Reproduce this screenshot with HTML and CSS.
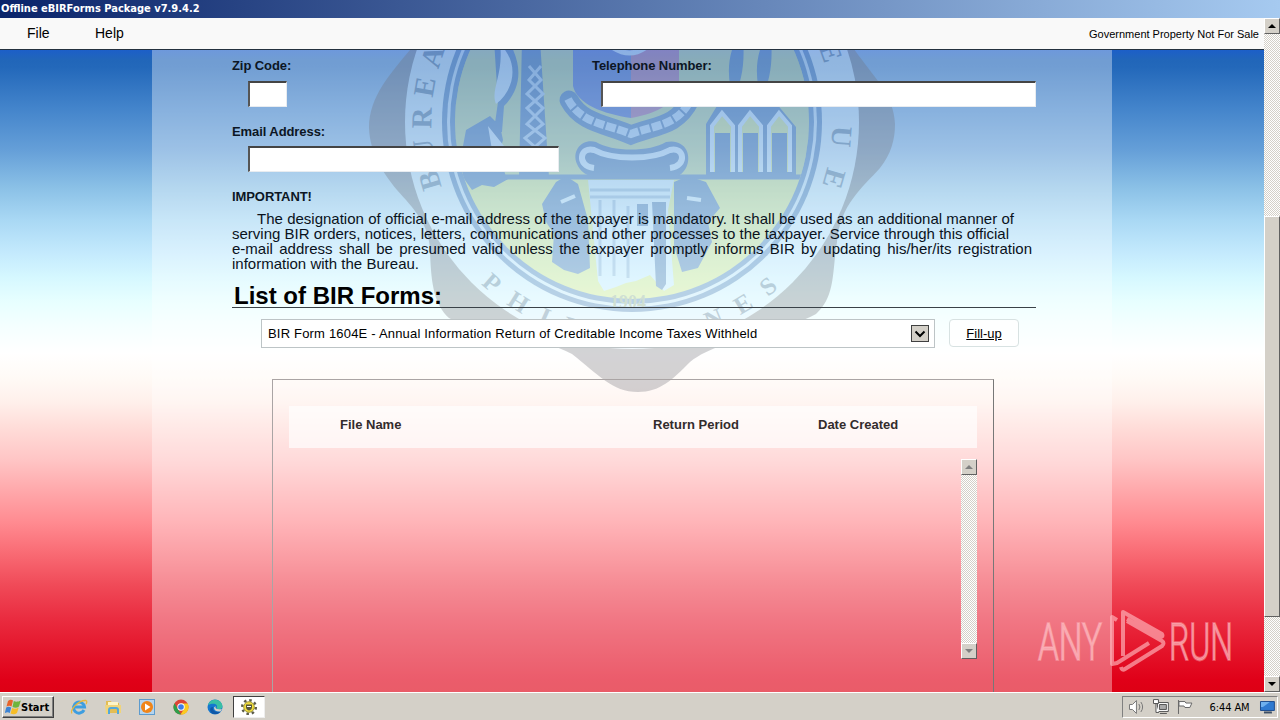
FILE: index.html
```html
<!DOCTYPE html>
<html lang="en">
<head>
    <meta charset="UTF-8">
    <title>Offline eBIRForms Package v7.9.4.2</title>
    <link rel="stylesheet" href="styles.css">
</head>
<body>
    <div class="titlebar">Offline eBIRForms Package v7.9.4.2</div>

    <div class="window">
        <div class="page">
            <nav class="menu">
                <a class="menu-file">File</a>
                <a class="menu-help">Help</a>
                <span class="notice">Government Property Not For Sale</span>
            </nav>

            <main class="column">
                <svg class="seal" viewBox="152 50 960 642" width="960" height="642">
                    <defs>
                        <path id="arc-left" d="M442 187 A200 200 0 0 1 445 50"/>
                        <path id="arc-right" d="M818 46 A200 200 0 0 1 821 188"/>
                        <path id="arc-bottom" d="M481 284 A222 222 0 0 0 783 284"/>
                        <clipPath id="disc"><circle cx="632" cy="122" r="177"/></clipPath>
                    </defs>
                    <path fill="#707078" d="M418 40 C398 66 369 92 369 128 C370 154 384 174 397 190 C414 209 429 224 430 250 C431 284 434 304 449 318 C486 338 540 336 572 354 C598 374 612 392 638 392 C660 392 672 380 690 362 C720 338 780 334 816 314 C836 296 832 270 837 242 C840 205 862 188 880 168 C891 154 895 140 895 124 C894 92 868 72 848 40Z"/>
                    <circle cx="632" cy="122" r="227" fill="#dcf1ff"/>
                    <circle cx="632" cy="122" r="190" fill="#3e6dad"/>
                    <circle cx="632" cy="122" r="185" fill="#cfe6fb"/>
                    <circle cx="632" cy="122" r="182" fill="#3e6dad"/>
                    <circle cx="632" cy="122" r="177" fill="#dde873"/>
                    <g clip-path="url(#disc)">
                        <rect x="450" y="40" width="370" height="137" fill="#a8c088" opacity=".6"/>
                        <path stroke="#3764a4" stroke-width="5" d="M462 177H815"/>
                        <!-- left tower and plant -->
                        <path fill="#3764a4" d="M522 40h18l9 137h-30zM466 130l24-14 10 10 3 14-4 14 8 26-50-2zM462 176l48 2-16 9-12-2-10 5zM494 40h14c18 30 10 52-4 66l-2 26-8-2 4-28z"/>
                        <path fill="#d5ebff" d="M500 44c20 20 14 46-4 60-6-14 8-30 4-60zM488 126l16 20-12 4z"/>
                        <path fill="none" stroke="#b5d0f0" stroke-width="3" d="M529 66l12 14-14 14 16 14-16 16 18 14-18 16 18 14M541 66l-12 14 14 14-16 14 16 16-18 14 18 16"/>
                        <!-- shield and ribbon -->
                        <path fill="#3c56c0" d="M573 40h58v78c-28-4-54-14-58-32z"/>
                        <path fill="#b05288" d="M631 40h48v48c-6 18-26 26-48 30z"/>
                        <path fill="none" stroke="#cfe6fb" stroke-width="5" d="M608 44q22 18 42 0"/>
                        <path fill="none" stroke="#3764a4" stroke-width="19" stroke-linecap="round" d="M569 100c13 24 38 24 62 35 24-10 46-8 59-35"/>
                        <path fill="none" stroke="#bcd8f8" stroke-width="8" stroke-dasharray="10 2" d="M568 99c13 25 39 25 63 35 24-9 47-8 60-35"/>
                        <!-- granaries -->
                        <path fill="#3764a4" d="M706 178v-54l14-23 9-16 9 18 9-18 9 18 10-18 10 18 20 24v51z"/>
                        <path fill="#dde873" stroke="#d5ebff" stroke-width="4" d="M712 172v-46l10-13 11 13v46M740 172v-46l10-13 11 13v46M769 172v-46l10-13 11 13v46"/>
                        <path fill="#3764a4" d="M715 133h15v43h-15zM743 133h15v43h-15zM772 133h15v43h-15zM736 40c-10 20-8 40-3 60 9-18 12-38 10-60zM764 40c-10 20-8 40-3 60 9-18 12-38 10-60z"/>
                        <!-- column capital -->
                        <path fill="#3764a4" d="M577 164c-6-14 6-26 19-22 16 10 54 10 70 0 18-4 27 12 20 26-8 14-22 10-38 10h-36c-15 0-29 0-35-14z"/>
                        <path fill="none" stroke="#d5ebff" stroke-width="6" d="M594 168c-18-2-14-22 0-18 18 10 58 10 76 0 14-4 18 16 0 18"/>
                        <path fill="#d2ebff" d="M588 180h86l-6 30 6 75-10 6-14-16-14 6-10 2-10 4-12 4-6-10z"/>
                        <path fill="#3764a4" d="M556 182l10-6 12 8 10 36 2 48-12 6-14-4-12-8 2-28-8-12-4-18zM674 182l14-6 18 6 14 26-12 14 4 20-14 26-16 4-8-26zM652 202h14v82l-4 6-6-4zM637 204h11v22h-11z"/>
                        <path stroke="#3764a4" stroke-width="3" opacity=".5" d="M600 200v76M614 200v76M628 206v72M590 190h80M590 197h80"/>
                        <path stroke="#d5ebff" stroke-width="4" d="M561 202l14-6M687 198l14 2"/>
                    </g>
                    <text class="seal-year" x="610" y="308">1904</text>
                    <text class="seal-text side" textLength="140"><textPath href="#arc-left">BUREA</textPath></text>
                    <text class="seal-text side" textLength="142"><textPath href="#arc-right">ENUE</textPath></text>
                    <text class="seal-text" textLength="326"><textPath href="#arc-bottom">PHILIPPINES</textPath></text>
                </svg>

                <div class="content">
                    <div class="row">
                        <div class="field zip">
                            <label>Zip Code:</label>
                            <input type="text">
                        </div>
                        <div class="field phone">
                            <label>Telephone Number:</label>
                            <input type="text">
                        </div>
                    </div>
                    <div class="field email">
                        <label>Email Address:</label>
                        <input type="text">
                    </div>
                    <div class="important">IMPORTANT!</div>
                    <div class="note">
                        <span class="line line-1">The designation of official e-mail address of the taxpayer is mandatory. It shall be used as an additional manner of</span>
                        <span class="line line-2">serving BIR orders, notices, letters, communications and other processes to the taxpayer. Service through this official</span>
                        <span class="line line-3">e-mail address shall be presumed valid unless the taxpayer promptly informs BIR by updating his/her/its registration</span>
                        <span class="line line-4">information with the Bureau.</span>
                    </div>
                    <h2>List of BIR Forms:</h2>
                    <div class="picker">
                        <div class="select">
                            <span class="select-text">BIR Form 1604E - Annual Information Return of Creditable Income Taxes Withheld</span>
                            <span class="select-arrow"><svg width="12" height="8" viewBox="0 0 12 8"><path d="M1.500 1.500L6 6l4.500-4.500" fill="none" stroke="#000" stroke-width="2"/></svg></span>
                        </div>
                        <a class="fillup">Fill-up</a>
                    </div>
                    <div class="panel">
                        <div class="table-head">
                            <span class="th-name">File Name</span>
                            <span class="th-period">Return Period</span>
                            <span class="th-date">Date Created</span>
                        </div>
                        <div class="scroll inner">
                            <div class="scroll-btn"><i class="up off"></i></div>
                            <div class="scroll-btn"><i class="down off"></i></div>
                        </div>
                    </div>
                </div>
            </main>

            <svg class="anyrun" width="200" height="70" viewBox="1035 606 200 70">
                <text class="anyrun-text" transform="translate(1038 660) scale(.5 1)" textLength="128" lengthAdjust="spacingAndGlyphs">ANY</text>
                <text class="anyrun-text" transform="translate(1169 660) scale(.5 1)" textLength="128" lengthAdjust="spacingAndGlyphs">RUN</text>
                <path class="anyrun-mark" d="M1117 620l-5-3v47l5-1 32-20M1123 656v-44l39 22q2 3-2 3l-33-18M1121 667q1 4 4 2l37-23q3-3 0-5l-35-20"/>
            </svg>
        </div>

        <div class="scroll outer">
            <div class="scroll-btn"><i class="up"></i></div>
            <div class="scroll-thumb"></div>
            <div class="scroll-btn last"><i class="down"></i></div>
        </div>
    </div>

    <div class="taskbar">
        <div class="start">
            <svg width="16" height="16" viewBox="0 0 16 16">
                <path fill="#e8642a" d="M3 2c2-2 4-1.500 5-.5L6.500 7.500C5 6.500 3.500 6.500 1.500 7.500z"/>
                <path fill="#6fb53c" d="M8.800 2c2 1 4 1 7-.5L14 7.500c-2 1.500-4 1.500-6.500.5z"/>
                <path fill="#3d84d4" d="M1.200 8.500c1.500-1 3-1 5 0L4.800 14c-1.500-1-3-1-5 0z"/>
                <path fill="#f6bd27" d="M7.200 9c2 1 4 1 6.500-.5L12 14c-2 1.500-4 1.500-6.500.5z"/>
            </svg>
            <span>Start</span>
        </div>
        <div class="quick">
            <svg width="18" height="18" viewBox="0 0 18 18">
                <path d="M14 12a5.500 5.500 0 1 1 .5-3H5" fill="none" stroke="#3e9ee0" stroke-width="3"/>
                <path d="M2 15.500C-1 13 8 2 16 2.500c1.500.5.5 3 0 3.500" fill="none" stroke="#e9b73b" stroke-width="1.300"/>
            </svg>
            <svg width="18" height="18" viewBox="0 0 18 18">
                <path d="M2 3h5l1 2h7v10H2z" fill="#e3bd54"/>
                <path d="M4 4h10v5H4z" fill="#fdf4c8"/>
                <path d="M1 7h16v8h-3v-4H5v5H2z" fill="#f0d47a"/>
                <path d="M5 16v-4q0-2 2-2h5q2 0 2 2v4" fill="none" stroke="#52a8dc" stroke-width="2"/>
            </svg>
            <svg width="18" height="18" viewBox="0 0 18 18">
                <rect x="1.500" y="1.500" width="15" height="15" fill="#b5d4ee" stroke="#5d9bce"/>
                <circle cx="9" cy="9" r="6" fill="#f08519"/>
                <path d="M7 5.500v7L12.500 9z" fill="#fff"/>
            </svg>
            <svg width="18" height="18" viewBox="0 0 18 18">
                <circle cx="9" cy="9" r="7.500" fill="#dd4436"/>
                <path d="M2.500 5.200L9 16.500A7.500 7.500 0 0 1 2.500 5.200z" fill="#2d9f4b"/>
                <path d="M9 5.500h6.700A7.500 7.500 0 0 1 8.500 16.500l3.500-5.500z" fill="#fbcb20"/>
                <circle cx="9" cy="9" r="3.700" fill="#fff"/>
                <circle cx="9" cy="9" r="2.800" fill="#3f7de8"/>
            </svg>
            <svg width="18" height="18" viewBox="0 0 18 18">
                <circle cx="9" cy="9" r="7.500" fill="#1477cf"/>
                <path d="M2 7C4 0 15 0 16.500 8c0 4-5 4-6 2 2-3-2-6-8.500-3z" fill="#39bfa5"/>
                <path d="M7 9c-1 3 2 6 7.500 4.500-2 3-7 3.500-9.500 1C3.500 12 4 9 7 9z" fill="#1057a6"/>
                <path d="M9.500 8q-1 4 6.500 3l-1.500 2.500Q8 14 8 9.500z" fill="#d4d0c8"/>
            </svg>
        </div>
        <div class="task">
            <svg width="18" height="18" viewBox="0 0 18 18">
                <circle cx="9" cy="9" r="6.800" fill="none" stroke="#5a5a4a" stroke-width="2.500" stroke-dasharray="2.500 2.840"/>
                <circle cx="9" cy="9" r="5.300" fill="#f0dc3c" stroke="#a39a3a"/>
                <path d="M6 6.500h6v2.500q0 2.500-3 3.500-3-1-3-3.500z" fill="#56563a"/>
                <path d="M7 8.500h4" stroke="#fff"/>
            </svg>
        </div>
        <div class="tray">
            <svg width="18" height="18" viewBox="0 0 18 18" fill="#fff" stroke="#777">
                <path d="M1.500 6.500h3l4-4v13l-4-4h-3z"/>
                <path d="M11 6q2 3 0 6M13 4q3.500 5 0 10" fill="none"/>
            </svg>
            <svg width="18" height="18" viewBox="0 0 18 18" fill="#fff" stroke="#555">
                <path d="M5.500 4.500h11v9h-11z"/>
                <path d="M7.500 6.500h7v5h-7z" fill="#aaa"/>
                <path d="M1.500 1.500h5v4h-5zM4 5.500v9h3M8 15.500h7"/>
            </svg>
            <svg width="18" height="18" viewBox="0 0 18 18" fill="#fff" stroke="#666">
                <path d="M2.500 2v14"/>
                <path d="M3 3.500h6l1 1.500h6l-2 4.500h-5l-1-1.500H3z"/>
            </svg>
            <span class="clock">6:44 AM</span>
            <svg width="18" height="18" viewBox="0 0 18 18">
                <path d="M1.500 3.500h14v9h-14z" fill="#2f7ad0" stroke="#1d4c8d"/>
                <path d="M2 4h9l-7 5H2z" fill="#6eb0ee"/>
                <path d="M5 14.500h8" stroke="#3d4f66" stroke-width="2"/>
            </svg>
        </div>
    </div>
</body>
</html>
```

FILE: styles.css
```css
* {
    box-sizing: border-box;
}
body {
    margin: 0;
    width: 1280px;
    height: 720px;
    overflow: hidden;
    display: flex;
    flex-direction: column;
    font-family: "Liberation Sans", Arial, sans-serif;
    font-size: 13px;
    color: #000;
    background: #d4d0c8;
}
.titlebar {
    height: 18px;
    padding-left: 1px;
    color: #fff;
    font: bold 11px/18px "DejaVu Sans Condensed", Tahoma, sans-serif;
    background: linear-gradient(90deg, #0a246a, #a6caf0);
}
.window {
    height: 674px;
    display: flex;
}
.page {
    position: relative;
    width: 1264px;
    height: 674px;
    overflow: hidden;
    background: linear-gradient(#1c5fc8 32px, #2166b9 42px, #2368ba 49px, #4384cb 90px, #659fd8 132px, #8ac0e6 169px, #a9d8f4 202px, #c4eafd 235px, #d6f8ff 260px, #e8ffff 285px, #f5ffff 310px, #fff 335px, #fffaf6 360px, #fff0eb 384px, #ffddd9 409px, #ffc5c5 442px, #ffa5a8 476px, #ff8a90 505px, #f96c75 534px, #f04a58 567px, #ea2c40 600px, #e4142a 633px, #e00018 662px, #dd0014);
}
.menu {
    display: flex;
    height: 32px;
    padding: 0 5px 0 27px;
    line-height: 31px;
    font-size: 14px;
    background: #f9f9f9;
    border-bottom: 1px solid #24313f;
}
.menu-file {
    width: 68px;
}
.notice {
    margin-left: auto;
    font-size: 11px;
    line-height: 33px;
}

/* main column */
.column {
    position: relative;
    width: 960px;
    height: 642px;
    margin: 0 auto;
    overflow: hidden;
    background: rgba(255, 255, 255, 0.36);
}
.seal {
    position: absolute;
    top: 0;
    left: 0;
    opacity: 0.3;
}
.seal-text {
    font: bold 25px "Liberation Serif", serif;
    fill: #4d6b8c;
}
.side {
    font-size: 29px;
}
.seal-year {
    font: bold 18px "Liberation Serif", serif;
    fill: #8a9a70;
}
.content {
    position: relative;
    width: 804px;
    margin-left: 80px;
    padding-top: 7px;
}
.row {
    display: flex;
    height: 66px;
}
.field label {
    display: block;
    height: 24px;
    font-weight: bold;
    line-height: 17px;
    letter-spacing: -0.08px;
    color: #0c1624;
}
.field input {
    display: block;
    height: 26px;
    margin: 0 0 0 16px;
    background: #fff;
    border: 1px solid #e8ecf0;
    border-top: 2px solid #444;
    border-left: 2px solid #555;
    border-radius: 0;
}
.zip {
    width: 360px;
}
.zip input {
    width: 39px;
}
.phone input {
    width: 435px;
    margin-left: 9px;
}
.email {
    height: 65px;
}
.email label {
    height: 23px;
}
.email input {
    width: 311px;
}
.important {
    height: 23px;
    font-weight: bold;
    line-height: 17px;
    letter-spacing: -0.08px;
    color: #0c1624;
}
.note {
    height: 70px;
    font-size: 15px;
    line-height: 15px;
    color: #0a121c;
}
.line {
    display: block;
    width: 800px;
    white-space: nowrap;
    text-align-last: justify;
}
.line-1 {
    width: 757px;
    margin-left: 25px;
}
.line-2 {
    width: 777px;
}
.line-4 {
    width: 187px;
}
h2 {
    height: 27px;
    margin: 0;
    padding-left: 2px;
    font-size: 24px;
    line-height: 30px;
    border-bottom: 1px solid #3a4248;
}
.picker {
    display: flex;
    gap: 14px;
    margin: 11px 0 0 29px;
}
.select {
    display: flex;
    align-items: center;
    justify-content: space-between;
    width: 674px;
    height: 29px;
    padding: 0 5px 0 6px;
    background: #fff;
    border: 1px solid #bdc4c6;
}
.select-text {
    letter-spacing: 0.19px;
}
.select-arrow {
    display: flex;
    align-items: center;
    justify-content: center;
    width: 18px;
    height: 17px;
    background: #d4d0c8;
    border: 1px solid #404040;
}
.fillup {
    width: 70px;
    height: 28px;
    line-height: 28px;
    text-align: center;
    text-decoration: underline;
    background: rgba(255, 255, 255, 0.8);
    border: 1px solid #d8e2e2;
    border-radius: 4px;
}
.panel {
    width: 722px;
    height: 340px;
    margin: 31px 0 0 40px;
    padding: 26px 16px 0;
    border: 1px solid #aaa4a4;
    border-right-color: #777;
}
.table-head {
    display: flex;
    height: 42px;
    padding-left: 51px;
    font-weight: bold;
    line-height: 38px;
    color: #332c2c;
    background: rgba(255, 255, 255, 0.68);
}
.th-name {
    width: 313px;
}
.th-period {
    width: 165px;
}

/* scrollbars */
.scroll {
    display: flex;
    flex-direction: column;
    width: 16px;
    background: repeating-conic-gradient(#fff 0 25%, #d4d0c8 0 50%) 0 0 / 2px 2px;
}
.outer {
    height: 674px;
}
.inner {
    justify-content: space-between;
    height: 200px;
    margin: 11px 0 0 672px;
}
.scroll-btn {
    display: flex;
    align-items: center;
    justify-content: center;
    height: 16px;
    background: #d4d0c8;
    border: 1px solid #fff;
    border-right-color: #606060;
    border-bottom-color: #606060;
}
.scroll-thumb {
    height: 401px;
    margin-top: 182px;
    background: #d4d0c8;
    border: 1px solid #fff;
    border-right-color: #606060;
    border-bottom-color: #606060;
}
.last {
    margin-top: auto;
}
.up,
.down {
    border: 4px solid transparent;
    border-top-width: 0;
    border-bottom: 4px solid #000;
}
.down {
    transform: rotate(180deg);
}
.off {
    border-bottom-color: #808080;
}

.anyrun {
    position: absolute;
    left: 1035px;
    top: 588px;
}
.anyrun-text {
    font: 300 51px Roboto, sans-serif;
    fill: rgba(255, 195, 200, 0.65);
    stroke: rgba(255, 195, 200, 0.4);
    stroke-width: 2px;
}
.anyrun-mark {
    fill: none;
    stroke: rgba(255, 185, 190, 0.65);
    stroke-width: 4;
    stroke-linejoin: round;
}

/* taskbar */
.taskbar {
    display: flex;
    height: 28px;
    padding-top: 3px;
    background: #d4d0c8;
    border-top: 1px solid #fff;
    font-family: "DejaVu Sans Condensed", Tahoma, sans-serif;
    font-size: 11px;
}
.start {
    display: flex;
    align-items: center;
    gap: 0;
    width: 52px;
    height: 22px;
    margin-left: 2px;
    padding-left: 2px;
    font-weight: bold;
    border: 1px solid #fff;
    border-right: 1px solid #404040;
    border-bottom: 1px solid #404040;
    box-shadow: inset -1px -1px #808080;
}
.quick {
    display: flex;
    align-items: center;
    gap: 16px;
    height: 22px;
    margin-left: 16px;
}
.task {
    display: flex;
    align-items: center;
    justify-content: center;
    width: 32px;
    height: 22px;
    margin-left: 9px;
    background: #fff;
    border: 1px solid #404040;
    border-right-color: #eee;
    border-bottom-color: #eee;
}
.tray {
    display: flex;
    align-items: center;
    gap: 6px;
    width: 156px;
    height: 22px;
    margin: 0 2px 0 auto;
    padding-left: 5px;
    border: 1px solid #808080;
    border-right-color: #fff;
    border-bottom-color: #fff;
}
.clock {
    width: 44px;
    margin-left: 10px;
    white-space: nowrap;
    letter-spacing: -0.1px;
}
```
